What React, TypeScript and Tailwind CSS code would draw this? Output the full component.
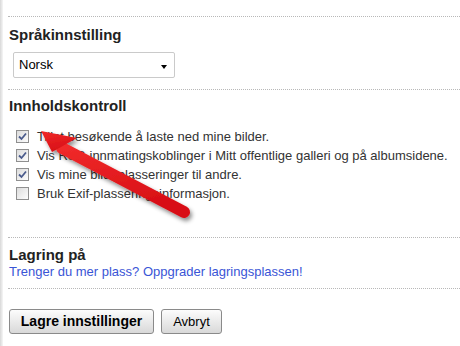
const ITEMS = [
  { label: 'Tillat besøkende å laste ned mine bilder.', checked: true },
  { label: 'Vis RSS-innmatingskoblinger i Mitt offentlige galleri og på albumsidene.', checked: true },
  { label: 'Vis mine bildeplasseringer til andre.', checked: true },
  { label: 'Bruk Exif-plasseringsinformasjon.', checked: false },
]

function Box({ checked }: { checked: boolean }) {
  return (
    <span className="w-[13px] h-[13px] shrink-0 border border-[#8f8f8f] bg-gradient-to-br from-[#dcdcdc] to-[#fdfdfd] flex items-center justify-center">
      {checked && (
        <svg width="9" height="9" viewBox="0 0 9 9">
          <path d="M1 4.5 L3.5 7 L8 1.5" fill="none" stroke="#4a5b8c" strokeWidth="1.8" />
        </svg>
      )}
    </span>
  )
}

function Divider() {
  return <div className="border-t border-dotted border-[#b8b8b8]" />
}

export default function App() {
  return (
    <div className="relative w-[460px] h-[346px] bg-white flex font-['Liberation_Sans',Arial,sans-serif] text-[#222]">
      <div className="w-[3px] bg-gradient-to-r from-[#d8d8d8] to-[#f6f6f6]" />
      <div className="flex-1 pl-[5px]">
        <div className="h-[16px]" />
        <Divider />

        {/* språk */}
        <h2 className="text-[15px] font-bold leading-[18px] mt-[9px] pl-[1px]">Språkinnstilling</h2>
        <div className="ml-[5px] mt-[8px] w-[162px] h-[26px] border border-[#cacaca] rounded-[2px] flex items-center justify-between pl-[5px] pr-[7px] text-[13px] text-black">
          <span>Norsk</span>
          <span className="w-0 h-0 border-l-[3.5px] border-r-[3.5px] border-t-[4px] border-l-transparent border-r-transparent border-t-black mt-[3px]" />
        </div>
        <div className="h-[11px]" />
        <Divider />

        {/* innhold */}
        <h2 className="text-[15px] font-bold leading-[18px] mt-[7px] pl-[1px]">Innholdskontroll</h2>
        <div className="mt-[15px] pl-[8px] flex flex-col gap-[6px] text-[13px] text-[#333]">
          {ITEMS.map(it => (
            <div key={it.label} className="flex items-center gap-[8px] h-[13px]">
              <Box checked={it.checked} />
              <span className="leading-[15px]">{it.label}</span>
            </div>
          ))}
        </div>
        <div className="h-[37px]" />
        <Divider />

        {/* lagring */}
        <h2 className="text-[15px] font-bold leading-[18px] mt-[8px] pl-[1px]">Lagring på</h2>
        <a className="block text-[13px] leading-[15px] text-[#3a55d6] pl-[1px]">
          Trenger du mer plass? Oppgrader lagringsplassen!
        </a>
        <div className="h-[9px]" />
        <Divider />

        {/* knapper */}
        <div className="flex gap-[7px] mt-[20px] pl-[1px]">
          <button
            type="button"
            className="h-[25px] w-[145px] rounded-[3px] border border-[#8a8a8a] bg-gradient-to-b from-[#fcfcfc] to-[#d9d9d9] text-[14px] font-bold text-black"
          >
            Lagre innstillinger
          </button>
          <button
            type="button"
            className="h-[25px] w-[61px] rounded-[3px] border border-[#8a8a8a] bg-gradient-to-b from-[#fcfcfc] to-[#d9d9d9] text-[13px] text-black"
          >
            Avbryt
          </button>
        </div>
      </div>

      {/* pil */}
      <svg className="absolute left-0 top-0 pointer-events-none" width="460" height="346" viewBox="0 0 460 346">
        <defs>
          <filter id="sh" x="-20%" y="-20%" width="140%" height="140%">
            <feDropShadow dx="2" dy="3" stdDeviation="2" floodColor="#000" floodOpacity="0.45" />
          </filter>
          <linearGradient id="rd" x1="0" y1="0" x2="0.3" y2="1">
            <stop offset="0" stopColor="#f02a2a" />
            <stop offset="1" stopColor="#d80f16" />
          </linearGradient>
        </defs>
        <g filter="url(#sh)">
          <line x1="62" y1="148" x2="184" y2="212" stroke="url(#rd)" strokeWidth="12" strokeLinecap="round" />
          <polygon points="41,131 52,152 77,138" fill="url(#rd)" />
        </g>
      </svg>
    </div>
  )
}
